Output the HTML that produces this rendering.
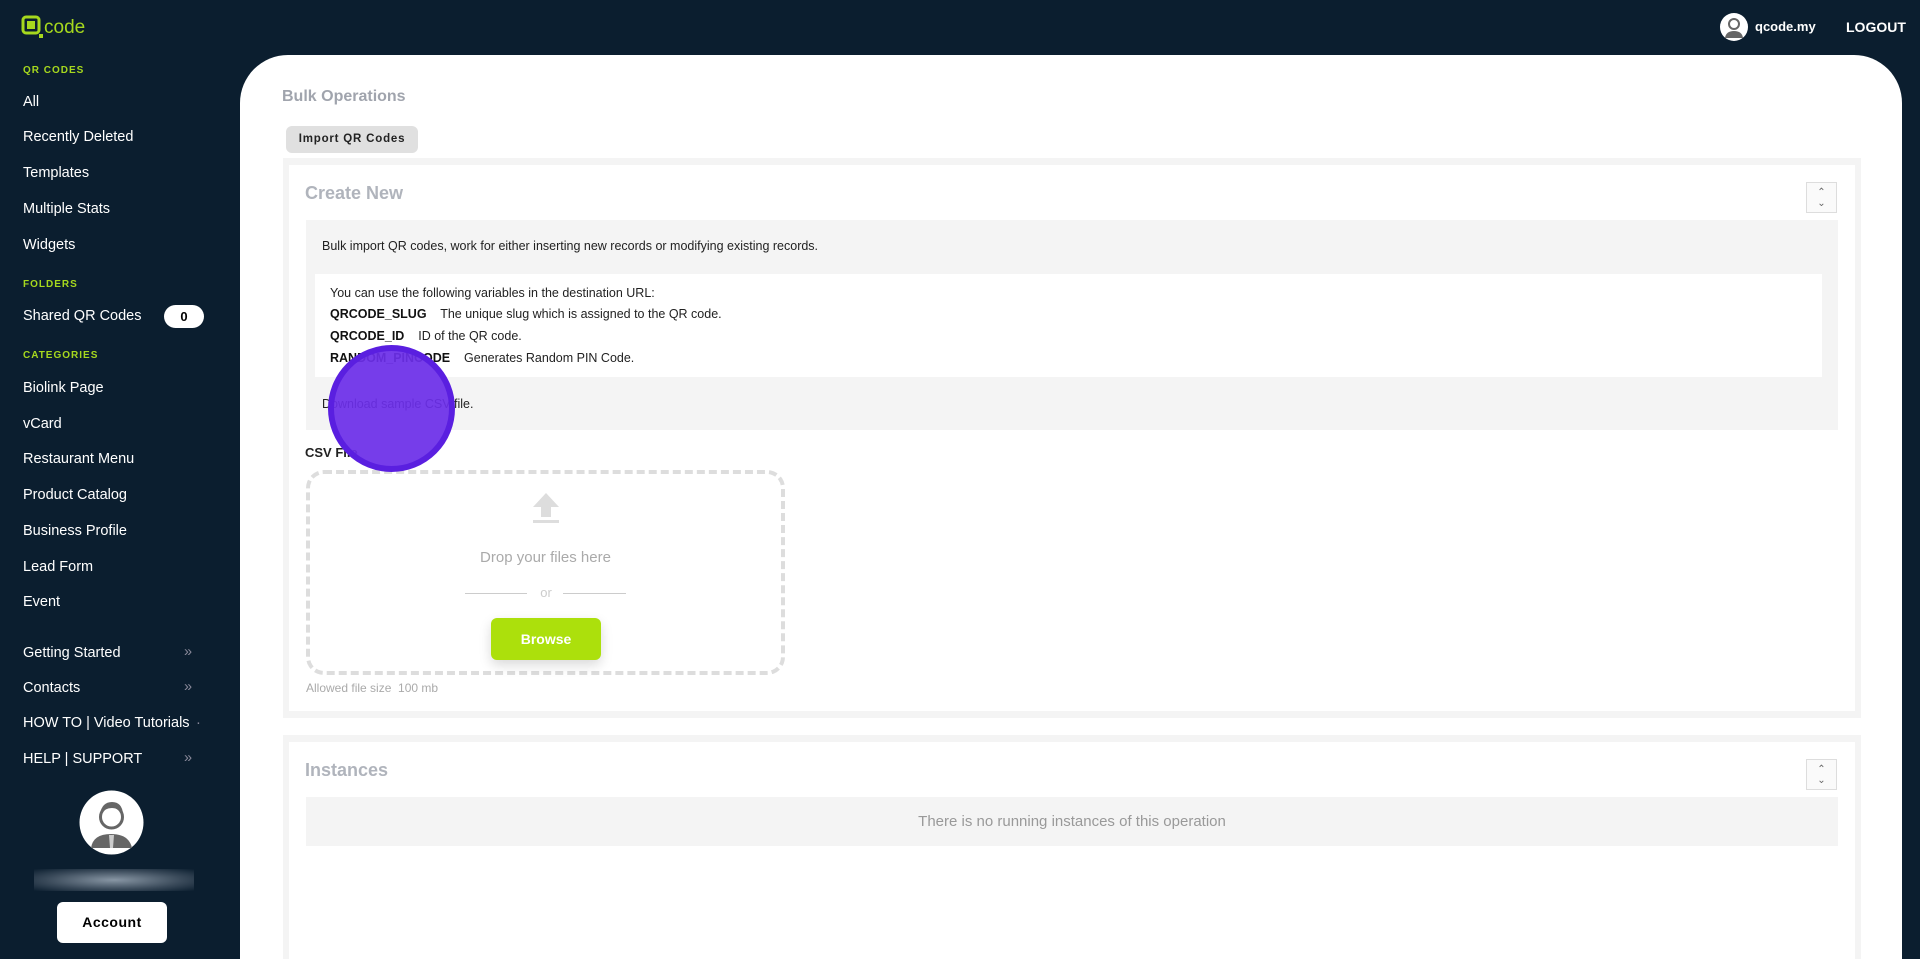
<!DOCTYPE html>
<html><head><meta charset="utf-8"><style>
*{box-sizing:border-box;margin:0;padding:0}
html,body{width:1920px;height:959px;overflow:hidden;background:#0b1e2f}
body{font-family:"Liberation Sans",sans-serif;position:relative}
.a{position:absolute}
.side{color:#fff;font-size:14.5px}
.hd{color:#a6d81e;font-size:10px;font-weight:bold;letter-spacing:1px}
.panel{left:240px;top:55px;width:1662px;height:904px;background:#fff;border-radius:48px 48px 0 0}
.gray{color:#a0a4ad}
.card{background:#f4f4f4;left:283px;width:1578px}
.inner{background:#fff;left:289px;width:1566px}
.cbtn{width:31px;height:31px;border:1px solid #ddd;background:#fafafa;font-size:10px;color:#666;text-align:center;line-height:11px;padding-top:4px}
.t{font-size:12.5px;color:#222}
b{color:#111}
</style></head><body>
<svg class="a" style="left:21px;top:15px" width="80" height="26" viewBox="0 0 80 26"><rect x="2" y="2" width="16" height="16" rx="3" fill="none" stroke="#a6d81e" stroke-width="3"/><rect x="6" y="6" width="8" height="8" fill="#a6d81e"/><rect x="18" y="19" width="4" height="4" fill="#a6d81e"/><text x="23" y="18" font-family="Liberation Sans" font-size="19" fill="#a6d81e">code</text></svg>
<div class="a hd" style="left:23px;top:65px">QR CODES</div>
<div class="a side" style="left:23px;top:94px">All</div>
<div class="a side" style="left:23px;top:129px">Recently Deleted</div>
<div class="a side" style="left:23px;top:165px">Templates</div>
<div class="a side" style="left:23px;top:201px">Multiple Stats</div>
<div class="a side" style="left:23px;top:237px">Widgets</div>
<div class="a hd" style="left:23px;top:279px">FOLDERS</div>
<div class="a side" style="left:23px;top:308px">Shared QR Codes</div>
<div class="a" style="left:164px;top:305px;width:40px;height:23px;background:#fff;border-radius:12px;text-align:center;font-weight:bold;font-size:13px;line-height:23px">0</div>
<div class="a hd" style="left:23px;top:350px">CATEGORIES</div>
<div class="a side" style="left:23px;top:380px">Biolink Page</div>
<div class="a side" style="left:23px;top:416px">vCard</div>
<div class="a side" style="left:23px;top:451px">Restaurant Menu</div>
<div class="a side" style="left:23px;top:487px">Product Catalog</div>
<div class="a side" style="left:23px;top:523px">Business Profile</div>
<div class="a side" style="left:23px;top:559px">Lead Form</div>
<div class="a side" style="left:23px;top:594px">Event</div>
<div class="a side" style="left:23px;top:645px">Getting Started</div><div class="a side" style="left:184px;top:644px;color:#889">»</div>
<div class="a side" style="left:23px;top:680px">Contacts</div><div class="a side" style="left:184px;top:679px;color:#889">»</div>
<div class="a side" style="left:23px;top:715px">HOW TO | Video Tutorials</div><div class="a side" style="left:196px;top:715px;color:#889">·</div>
<div class="a side" style="left:23px;top:751px">HELP | SUPPORT</div><div class="a side" style="left:184px;top:750px;color:#889">»</div>
<svg class="a" style="left:79px;top:790px" width="65" height="65" viewBox="0 0 65 65"><circle cx="32.5" cy="32.5" r="32" fill="#fff"/><circle cx="32.5" cy="27" r="11" fill="#fff" stroke="#666" stroke-width="3"/><path d="M21 24q2-12 12-12t11 12q-4-6-11-6t-12 6z" fill="#666"/><path d="M12 58q2-14 20-14t21 14z" fill="#666"/><path d="M30 45h5l-1 13h-3z" fill="#ccc"/></svg>
<div class="a" style="left:34px;top:869px;width:160px;height:22px;background:radial-gradient(ellipse at center,#8896a4 0%,#3a4a5a 60%,#0b1e2f 100%)"></div>
<div class="a" style="left:57px;top:902px;width:110px;height:41px;background:#fff;border-radius:6px;text-align:center;line-height:41px;font-weight:bold;font-size:14px;letter-spacing:.5px">Account</div>
<svg class="a" style="left:1720px;top:13px" width="28" height="28" viewBox="0 0 28 28"><circle cx="14" cy="14" r="14" fill="#fff"/><circle cx="14" cy="11" r="5" fill="none" stroke="#666" stroke-width="2"/><path d="M5 25q1-7 9-7t9 7z" fill="#666"/></svg>
<div class="a" style="left:1755px;top:19px;color:#fff;font-weight:bold;font-size:13px">qcode.my</div>
<div class="a" style="left:1846px;top:19px;color:#fff;font-weight:bold;font-size:14px">LOGOUT</div>
<div class="a panel"></div>
<div class="a gray" style="left:282px;top:88px;font-size:16px;font-weight:bold">Bulk Operations</div>
<div class="a" style="left:286px;top:126px;width:132px;height:27px;background:#e0e0e0;border-radius:6px;font-size:11.5px;font-weight:bold;letter-spacing:.8px;text-align:center;line-height:27px;color:#222">Import QR Codes</div>
<div class="a card" style="top:158px;height:560px"></div>
<div class="a inner" style="top:165px;height:546px"></div>
<div class="a" style="left:305px;top:183px;font-size:18px;font-weight:bold;color:#b0b4bc">Create New</div>
<div class="a cbtn" style="left:1806px;top:182px">⌃<br>⌄</div>
<div class="a" style="left:306px;top:220px;width:1532px;height:210px;background:#f4f4f4"></div>
<div class="a t" style="left:322px;top:239px">Bulk import QR codes, work for either inserting new records or modifying existing records.</div>
<div class="a" style="left:315px;top:274px;width:1507px;height:103px;background:#fff"></div>
<div class="a t" style="left:330px;top:286px">You can use the following variables in the destination URL:</div>
<div class="a t" style="left:330px;top:307px"><b>QRCODE_SLUG</b>&nbsp;&nbsp;&nbsp; The unique slug which is assigned to the QR code.</div>
<div class="a t" style="left:330px;top:329px"><b>QRCODE_ID</b>&nbsp;&nbsp;&nbsp; ID of the QR code.</div>
<div class="a t" style="left:330px;top:351px"><b>RANDOM_PINCODE</b>&nbsp;&nbsp;&nbsp; Generates Random PIN Code.</div>
<div class="a t" style="left:322px;top:397px">Download sample CSV file.</div>
<div class="a" style="left:305px;top:445px;font-size:13px;font-weight:bold;color:#222">CSV File</div>
<div class="a" style="left:306px;top:470px;width:479px;height:205px;border:4px dashed #ddd;border-radius:18px"></div>
<svg class="a" style="left:531px;top:492px" width="30" height="32" viewBox="0 0 30 32"><path d="M15 1L2 15h8v10h10V15h8z" fill="#ddd"/><rect x="2" y="28" width="26" height="3" fill="#ddd"/></svg>
<div class="a" style="left:306px;top:549px;width:479px;text-align:center;font-size:15px;color:#aaa">Drop your files here</div>
<div class="a" style="left:465px;top:593px;width:62px;height:1px;background:#ccc"></div>
<div class="a" style="left:563px;top:593px;width:63px;height:1px;background:#ccc"></div>
<div class="a" style="left:536px;top:585px;width:20px;text-align:center;font-size:13px;color:#ccc">or</div>
<div class="a" style="left:491px;top:618px;width:110px;height:42px;background:#ace00c;border-radius:6px;color:#fff;font-weight:bold;font-size:14px;text-align:center;line-height:42px;box-shadow:0 5px 12px rgba(0,0,0,.15)">Browse</div>
<div class="a" style="left:306px;top:681px;font-size:12px;color:#aaa">Allowed file size&nbsp;&nbsp;100 mb</div>
<div class="a card" style="top:735px;height:224px"></div>
<div class="a inner" style="top:742px;height:217px"></div>
<div class="a" style="left:305px;top:760px;font-size:18px;font-weight:bold;color:#b0b4bc">Instances</div>
<div class="a cbtn" style="left:1806px;top:759px">⌃<br>⌄</div>
<div class="a" style="left:306px;top:797px;width:1532px;height:49px;background:#f4f4f4;text-align:center;line-height:49px;font-size:15px;color:#999">There is no running instances of this operation</div>
<div class="a" style="left:328px;top:345px;width:127px;height:127px;border-radius:50%;background:rgba(108,46,232,.93);border:6px solid #5a1fe0"></div>
</body></html>
